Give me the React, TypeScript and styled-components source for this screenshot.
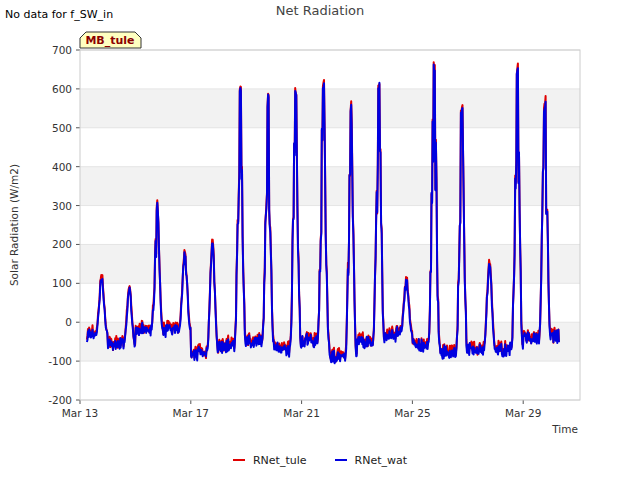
import React from 'react';
import styled, { createGlobalStyle } from 'styled-components';

const Global = createGlobalStyle`
  body { margin: 0; background: #fff; font-family: "DejaVu Sans", sans-serif; }
`;

const Page = styled.div`
  width: 640px;
  height: 480px;
  display: flex;
  flex-direction: column;
`;

const Header = styled.div`
  height: 30px;
  position: relative;
  display: flex;
  justify-content: center;
  padding-top: 3px;
  box-sizing: border-box;
`;

const NoData = styled.span`
  position: absolute;
  left: 5px;
  top: 8px;
  font-size: 11px;
  color: #000;
`;

const Title = styled.span`
  font-size: 13px;
  color: #444;
`;

const Legend = styled.div`
  height: 24px;
  display: flex;
  justify-content: center;
  align-items: center;
  gap: 28px;
  font-size: 11px;
  color: #222;
`;

const LegendItem = styled.div`
  display: flex;
  align-items: center;
  gap: 8px;
`;

const Swatch = styled.span<{ color: string }>`
  width: 12px;
  height: 2px;
  background: ${({ color }) => color};
`;

// plot geometry (svg coordinates, page y minus 30)
const X0 = 80, X1 = 580, Y0 = 20, Y1 = 370;
const yOf = (v: number) => Y0 + ((700 - v) / 900) * (Y1 - Y0);
const xOf = (d: number) => X0 + (d - 13) * 27.7;

const peaks = [115, 90, 310, 180, 210, 605, 590, 600, 630, 560, 625, 110, 670, 580, 160, 670, 580];
const nights = [-30, -60, -20, -20, -80, -60, -50, -70, -50, -90, -50, -30, -60, -80, -70, -70, -40];

function rng(seed: number) {
  let s = seed;
  return () => {
    s = (s * 16807) % 2147483647;
    return s / 2147483647;
  };
}

function series(seed: number, shift: number) {
  const r = rng(seed);
  const r2 = rng(99);
  const pts: string[] = [];
  for (let t = 13.25; t <= 30.3; t += 0.02) {
    const day = Math.floor(t - 13);
    const f = t - Math.floor(t);
    const pk = peaks[Math.min(day, peaks.length - 1)];
    const ng = nights[Math.min(day, nights.length - 1)];
    let v = ng + (r2() - 0.5) * 30;
    if (f > 0.57 && f < 0.99) {
      const s = Math.sin((Math.PI * (f - 0.57)) / 0.42);
      const spiky = pk > 250 ? 0.55 + 0.45 * r2() : 0.85 + 0.15 * r2();
      v = ng + (pk - ng) * Math.pow(s, 2.2) * spiky;
      if (Math.abs(f - 0.78) < 0.03) v = Math.max(v, pk * (0.9 + 0.1 * r2()));
    }
    v += (r() - 0.5) * 12 + shift;
    pts.push(`${xOf(t).toFixed(1)},${yOf(v).toFixed(1)}`);
  }
  return pts.join(' ');
}

const red = series(7, 6);
const blue = series(11, 0);

const yTicks = [700, 600, 500, 400, 300, 200, 100, 0, -100, -200];
const bands = [[500, 600], [300, 400], [100, 200], [-100, 0]];
const xTicks = [['Mar 13', 13], ['Mar 17', 17], ['Mar 21', 21], ['Mar 25', 25], ['Mar 29', 29]] as const;

const Chart = () => (
  <svg width={640} height={418} style={{ display: 'block' }} fontFamily="DejaVu Sans, sans-serif">
    <rect x={X0} y={Y0} width={X1 - X0} height={Y1 - Y0} fill="#fff" />
    {bands.map(([a, b]) => (
      <rect key={a} x={X0} y={yOf(b)} width={X1 - X0} height={yOf(a) - yOf(b)} fill="#f2f2f2" />
    ))}
    {yTicks.map((v) => (
      <g key={v}>
        <line x1={X0} x2={X1} y1={yOf(v)} y2={yOf(v)} stroke="#e0e0e0" strokeWidth={0.8} />
        <line x1={X0 - 4} x2={X0} y1={yOf(v)} y2={yOf(v)} stroke="#555" />
        <text x={X0 - 8} y={yOf(v) + 4} fontSize={10.5} fill="#333" textAnchor="end">{v}</text>
      </g>
    ))}
    {xTicks.map(([l, d]) => (
      <g key={l}>
        <line x1={xOf(d)} x2={xOf(d)} y1={Y1} y2={Y1 + 4} stroke="#555" />
        <text x={xOf(d)} y={Y1 + 17} fontSize={10.5} fill="#333" textAnchor="middle">{l}</text>
      </g>
    ))}
    <rect x={X0} y={Y0} width={X1 - X0} height={Y1 - Y0} fill="none" stroke="#ccc" />
    <polyline points={red} fill="none" stroke="#e00000" strokeWidth={2} strokeLinejoin="round" />
    <polyline points={blue} fill="none" stroke="#0000e0" strokeWidth={2} strokeLinejoin="round" />
    <text x={565} y={Y1 + 33} fontSize={10.5} fill="#333" textAnchor="middle">Time</text>
    <text transform={`translate(18 ${(Y0 + Y1) / 2}) rotate(-90)`} fontSize={10.5} fill="#333" textAnchor="middle">
      Solar Radiation (W/m2)
    </text>
    <path d="M80 18 L80 8 L86 2 L135 2 L141 8 L141 18 Z" fill="#ffffc0" stroke="#333" />
    <text x={110} y={14} fontSize={11} fontWeight="bold" fill="#8b0000" textAnchor="middle">MB_tule</text>
  </svg>
);

export default function App() {
  return (
    <Page>
      <Global />
      <Header>
        <NoData>No data for f_SW_in</NoData>
        <Title>Net Radiation</Title>
      </Header>
      <Chart />
      <Legend>
        <LegendItem><Swatch color="#e00000" />RNet_tule</LegendItem>
        <LegendItem><Swatch color="#0000e0" />RNet_wat</LegendItem>
      </Legend>
    </Page>
  );
}
